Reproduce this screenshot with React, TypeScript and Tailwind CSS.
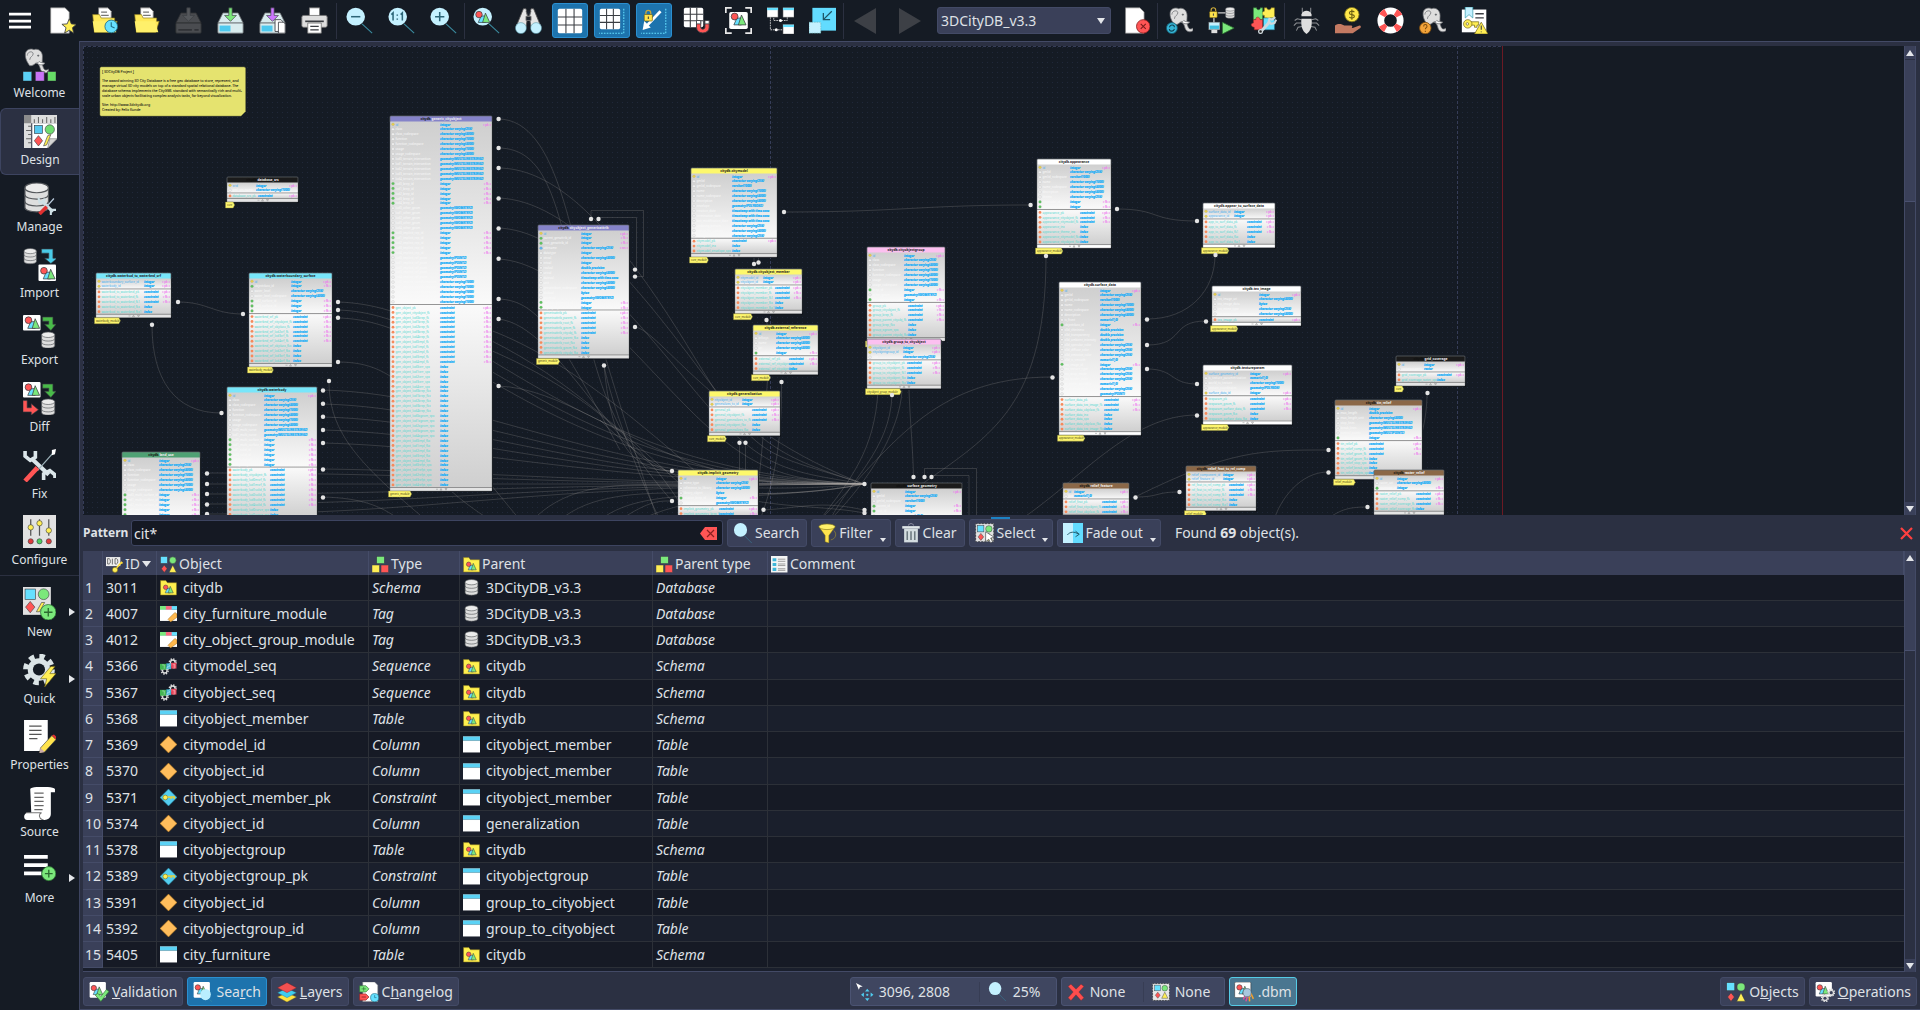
import type { ReactNode } from "react";

/* ------------------------------------------------------------------ icons */

const RED = "#ff5555";
const CYAN = "#66e0ff";
const GREEN = "#7be87b";
const YELLOW = "#ffee55";
const PALE = "#c4f1ff";
const GRAY = "#dedede";
const INK = "#3a3d42";

function Icon({ size = 27, children }: { size?: number; children: ReactNode }) {
  return (
    <svg width={size} height={size} viewBox="0 0 32 32" fill="none" aria-hidden="true" className="shrink-0">
      {children}
    </svg>
  );
}

const Shapes = ({ x = 0, y = 0, s = 1 }: { x?: number; y?: number; s?: number }) => (
  <g transform={`translate(${x} ${y}) scale(${s})`} stroke={INK} strokeWidth="1">
    <path d="M9 9h6v9H5z" fill={CYAN} />
    <path d="M15 5l6 13H11z" fill={GREEN} />
    <circle cx="6" cy="7" r="4.5" fill={RED} />
  </g>
);

const FourShapes = ({ x = 0, y = 0, s = 1 }: { x?: number; y?: number; s?: number }) => (
  <g transform={`translate(${x} ${y}) scale(${s})`} stroke={INK} strokeWidth="1">
    <rect x="1" y="1" width="13" height="13" fill={CYAN} />
    <circle cx="24" cy="8" r="6.5" fill={GREEN} />
    <path d="M8 17l5.500 7L8 31l-5.500-7z" fill={RED} />
    <path d="M24 17l7 14H17z" fill={YELLOW} />
  </g>
);

const Cylinder = ({ x = 0, y = 0, s = 1 }: { x?: number; y?: number; s?: number }) => (
  <g transform={`translate(${x} ${y}) scale(${s})`} stroke="#55585c" strokeWidth="1.2">
    <path d="M2 6v20c0 6 24 6 24 0V6" fill={GRAY} />
    <ellipse cx="14" cy="6" rx="12" ry="5" fill="#ececec" />
    <path d="M2 13c0 6 24 6 24 0M2 20c0 6 24 6 24 0" />
  </g>
);

const Elephant = ({ x = 0, y = 0, s = 1 }: { x?: number; y?: number; s?: number }) => (
  <g transform={`translate(${x} ${y}) scale(${s})`} stroke="#6b6e72" strokeWidth=".9">
    <path
      d="M3 6C4 2 9 0 13 2c5-2 10 2 10 8 0 5-1 9 1 13 1 3 3 4 6 2v3c-4 3-9 1-10-5-1-3-2-5-5-5-2 2-4 3-7 3-3-4-6-9-5-15z"
      fill={GRAY}
    />
    <path d="M5 9c0-5 7-6 7-2 0 3-4 3-4 7M16 17c4 3 7 2 10 1" />
    <path d="M17 18c3 3 7 2 9 0-2-1-5 0-7-2z" fill="#fff" />
    <circle cx="18" cy="9" r=".8" fill={INK} />
  </g>
);

const Page = ({ x = 3, y = 1, w = 22, h = 30 }: { x?: number; y?: number; w?: number; h?: number }) => (
  <path d={`M${x} ${y}h${w - 5}l5 5v${h - 5}h-${w}z`} fill="#fff" stroke="#888" strokeWidth=".8" />
);

const Folder = () => (
  <>
    <path d="M9 1h11l4 4v12H9z" fill="#fff" stroke="#777" />
    <path d="M12 6h7M12 10h9" stroke="#777" strokeWidth="1.500" />
    <path d="M2 9h8l2 4h16v4l3 0-4 13H4z" fill="#ffe95a" stroke="#8a7a20" strokeWidth=".8" />
    <path d="M4 30l-2-13h24l4 13z" fill="#fff06a" />
  </>
);

const Drive = ({ body, arrow, dim }: { body: string; arrow: string; dim?: boolean }) => (
  <>
    <path d="M7 7h18l6 12H1z" fill={body} stroke={dim ? "#2c2e31" : "#6a6d70"} />
    <rect x="1" y="19" width="30" height="12" rx="1" fill={body} stroke={dim ? "#2c2e31" : "#6a6d70"} />
    {dim ? <path d="M4 27h16M23 27h5" stroke="#303236" strokeWidth="2" /> : <rect x="3" y="22" width="13" height="7" fill="#4ec9ee" />}
    <path d="M14 1h4v9h5l-7 7-7-7h5z" fill={arrow} stroke={INK} strokeWidth=".8" />
  </>
);

const Lens = ({ children }: { children?: ReactNode }) => (
  <>
    <path d="M19 20l12 11" stroke="#3b8ca0" strokeWidth="1.300" />
    <ellipse cx="11.500" cy="11.500" rx="11" ry="10.500" fill={PALE} />
    {children}
  </>
);

const Grid = ({ n = 3, s = 30, o = 1 }: { n?: number; s?: number; o?: number }) => (
  <g>
    <rect x={o} y={o} width={s} height={s} rx="2" fill="#fff" />
    {Array.from({ length: n - 1 }, (_, i) => {
      const p = o + (s / n) * (i + 1);
      return <path key={i} d={`M${p} ${o}v${s}M${o} ${p}h${s}`} stroke={INK} strokeWidth="1.300" />;
    })}
  </g>
);

const Win = ({ x, y, w, h }: { x: number; y: number; w: number; h: number }) => (
  <g>
    <rect x={x} y={y} width={w} height={h} fill="#fff" stroke="#777" strokeWidth=".6" />
    <rect x={x} y={y} width={w} height={h / 4} fill={CYAN} />
  </g>
);

const Gear = ({ cx, cy, r, hole, fill = GRAY }: { cx: number; cy: number; r: number; hole: string; fill?: string }) => (
  <g>
    <circle cx={cx} cy={cy} r={r * 0.9} stroke={fill} strokeWidth={r * 0.4} strokeDasharray={`${r * 0.36} ${r * 0.347}`} />
    <circle cx={cx} cy={cy} r={r * 0.78} fill={fill} />
    <circle cx={cx} cy={cy} r={r * 0.42} fill={hole} />
  </g>
);

const Lock = ({ x, y, s = 1 }: { x: number; y: number; s?: number }) => (
  <g transform={`translate(${x} ${y}) scale(${s})`}>
    <path d="M3 6V4c0-4 6-4 6 0v2" stroke="#c9a83a" strokeWidth="1.500" />
    <rect x="1" y="6" width="10" height="8" rx="1" fill="#ffe34d" stroke="#6b5a10" strokeWidth=".8" />
    <path d="M6 8.500v3" stroke={INK} strokeWidth="1.300" />
  </g>
);

const Plus = ({ cx, cy, r }: { cx: number; cy: number; r: number }) => (
  <g>
    <circle cx={cx} cy={cy} r={r} fill={GREEN} stroke="#2f7a35" strokeWidth=".8" />
    <path d={`M${cx - r * 0.55} ${cy}h${r * 1.1}M${cx} ${cy - r * 0.55}v${r * 1.1}`} stroke="#2c6b30" strokeWidth="1.300" />
  </g>
);

const Arc = ({ color, d }: { color: string; d: string }) => <path d={d} fill={color} stroke={INK} strokeWidth=".6" />;

const icons: Record<string, ReactNode> = {
  menu: <path d="M0 4h32v4H0zM0 14h32v4H0zM0 23h32v4H0z" fill="#fff" />,
  newFile: (
    <>
      <Page x={2} y={1} w={22} h={30} />
      <path d="M24 14l2.500 6 6 .5-4.700 4 1.500 6.500-5.300-3.500-5.500 3.500 1.700-6.500-4.900-4 6.200-.5z" fill={YELLOW} stroke={INK} />
    </>
  ),
  recent: (
    <>
      <Folder />
      <circle cx="24" cy="23" r="7.500" fill={CYAN} stroke="#1f6d85" />
      <path d="M24 18v5l4 2" stroke="#1f6d85" strokeWidth="1.300" />
    </>
  ),
  open: <Folder />,
  saveOff: <Drive body="#4a4c50" arrow="#55585c" dim />,
  save: <Drive body="#d9ecee" arrow={GREEN} />,
  saveCopy: (
    <>
      <Drive body="#d9ecee" arrow="#cc77ff" />
      <path d="M19 15h7l2 2v12h-9z" fill="#fff" stroke={INK} />
      <path d="M23 18h6l2 2v11h-8z" fill="#fff" stroke={INK} />
    </>
  ),
  print: (
    <>
      <path d="M10 1h12v12H10z" fill="#fff" stroke="#777" />
      <rect x="1" y="10" width="30" height="14" rx="2" fill={GRAY} stroke="#777" />
      <path d="M5 17h22" stroke={INK} strokeWidth="2" />
      <path d="M8 19h16v12H8z" fill="#fff" stroke="#777" />
      <path d="M11 23h10M11 27h10" stroke={INK} strokeWidth="1.500" />
    </>
  ),
  zoomOut: (
    <Lens>
      <path d="M6 11.500h11" stroke="#2c6678" strokeWidth="1.800" />
    </Lens>
  ),
  zoomOne: (
    <Lens>
      <path d="M4 9l2-2v9M15 9l2-2v9M11 9v1.500M11 13.500V15" stroke="#2c6678" strokeWidth="1.800" />
    </Lens>
  ),
  zoomIn: (
    <Lens>
      <path d="M6 11.500h11M11.500 6v11" stroke="#2c6678" strokeWidth="1.800" />
    </Lens>
  ),
  findObj: (
    <Lens>
      <Shapes x={2} y={3} s={0.85} />
    </Lens>
  ),
  binoculars: (
    <>
      <path d="M10 2h3l2 9-2 13H1zM22 2h-3l-2 9 2 13h12z" fill="#e6e6e6" stroke="#555" />
      <path d="M13 5l2 6h2l2-6M13 11h6v5h-6z" fill="#1c222c" stroke="#777" />
      <ellipse cx="7" cy="25" rx="6.500" ry="6.500" fill={PALE} stroke="#4a8a9a" strokeWidth=".6" />
      <ellipse cx="25" cy="25" rx="6.500" ry="6.500" fill={PALE} stroke="#4a8a9a" strokeWidth=".6" />
    </>
  ),
  grid: <Grid />,
  gridPage: (
    <>
      <Grid s={25} o={1} />
      <path d="M30.500 1v30H0" stroke={CYAN} strokeWidth="1.300" strokeDasharray="2 1.500" />
    </>
  ),
  delimiter: (
    <>
      <path d="M30.500 1v30H0" stroke={CYAN} strokeWidth="1.300" strokeDasharray="2 1.500" />
      <path d="M24 4L7 22" stroke="#fff" strokeWidth="3.500" />
      <path d="M2 27l2-11 8 8z" fill="#fff" />
      <Lock x={3} y={2} />
    </>
  ),
  snap: (
    <>
      <Grid s={23} o={1} />
      <path d="M16 17v7c0 9 15 9 15 0v-7h-5v7c0 3-5 3-5 0v-7z" fill={RED} stroke={INK} />
      <path d="M16 16h5v4h-5zM26 16h5v4h-5z" fill="#fff" stroke={INK} />
    </>
  ),
  fit: (
    <>
      <path d="M1 7V1h7M24 1h7v6M31 25v6h-7M8 31H1v-6" stroke="#e8e8e8" strokeWidth="2" />
      <rect x="5" y="6" width="22" height="20" rx="2" fill="#fff" />
      <Shapes x={6} y={5} s={0.9} />
    </>
  ),
  overview: (
    <>
      <path d="M8 10v6h16v-6M16 16v0M4 12v15h15" stroke="#ddd" strokeWidth="1" strokeDasharray="2 1" />
      <Win x={0} y={1} w={13} h={11} />
      <Win x={19} y={1} w={13} h={11} />
      <Win x={19} y={21} w={13} h={11} />
      <circle cx="16" cy="16" r="1.800" fill="#fff" />
      <circle cx="11" cy="27" r="1.800" fill="#fff" />
    </>
  ),
  compact: (
    <>
      <rect x="4" y="1" width="28" height="27" fill="#62dcff" />
      <rect x="0" y="18" width="14" height="13" fill={PALE} stroke="#5aa" strokeWidth=".6" strokeDasharray="2 1" />
      <path d="M27 5L17 15M17 7v8h8" stroke="#1e5566" strokeWidth="1.500" />
    </>
  ),
  closeModel: (
    <>
      <Page x={3} y={1} w={22} h={30} />
      <circle cx="24" cy="23" r="8" fill={RED} stroke="#8d2020" />
      <path d="M21 20l6 6M27 20l-6 6" stroke="#7a1c1c" strokeWidth="1.300" />
    </>
  ),
  elephantSync: (
    <>
      <Elephant x={2} s={1} />
      <circle cx="7" cy="25" r="6.500" fill="#35b5d6" stroke="#17586b" />
      <path d="M4 24c1-4 6-3 6 0M10 26c-1 4-6 3-6 0" stroke="#124555" strokeWidth="1.300" />
    </>
  ),
  deploy: (
    <>
      <path d="M12 7h9M7 12v18" stroke="#ccc" strokeWidth="1.500" />
      <Lock x={1} y={0} s={0.9} />
      <Cylinder x={20} y={0} s={0.44} />
      <rect x="1" y="18" width="13" height="9" fill={PALE} stroke="#777" strokeWidth=".6" />
      <path d="M2 22h11v4H2z" fill="#3fbfe0" />
      <path d="M4 27h7v4H4z" fill={GRAY} />
      <path d="M17 18l14 7-14 7z" fill={GREEN} stroke="#2b6a30" />
    </>
  ),
  plugin: (
    <>
      <path d="M4 1h4c-1 3 5 3 4 0h3v5c3-1 3 5 0 4v5H4z" fill={GREEN} stroke="#2b6a30" strokeWidth=".6" />
      <path d="M17 1h3c0 3 5 3 5 0h4v12h-5c1 4-5 4-4 0h-3v-3c-3 0-3-5 0-5z" fill={YELLOW} stroke="#80741a" strokeWidth=".6" />
      <path d="M4 15h3c-1-4 5-4 5 0h3v12H5v-3c-4 0-5-5-1-5z" fill={RED} stroke="#8d2020" strokeWidth=".6" />
      <path d="M16 13h13v14H16z" fill={CYAN} stroke="#1f6d85" strokeWidth=".6" />
      <path d="M13 29l11-12" stroke="#cfd8dc" strokeWidth="3.500" />
      <path d="M30 12l-4 3-3-1-1 4 3 2 4-1 2-4" stroke="#cfd8dc" strokeWidth="2.500" />
      <circle cx="12.500" cy="29" r="2.300" fill="#222" stroke="#cfd8dc" strokeWidth="1.500" />
    </>
  ),
  bug: (
    <>
      <path d="M11 1v5l3 3M21 1v5l-3 3M10 15l-5-1-3 2M10 19l-6 0-3 3M11 23l-5 1-2 4M22 15l5-1 3 2M22 19h6l3 3M21 23l5 1 2 4" stroke="#8b8e92" strokeWidth="1.200" />
      <path d="M10 9c1-6 11-6 12 0v2H10z" fill={GRAY} />
      <path d="M10 14h12c1 8-1 15-6 18-5-3-7-10-6-18z" fill={GRAY} />
    </>
  ),
  donate: (
    <>
      <circle cx="20" cy="9" r="8.500" fill="#ffe84a" stroke="#80741a" />
      <path d="M23 6c-2-2-6-1-6 1 0 3 6 1 6 4 0 2-4 3-6 1M20 3v12" stroke="#6b5f12" strokeWidth="1.300" />
      <path d="M0 22c4-3 8-2 11 0h8c2 0 2 3 0 3h-6 8l8-3c2 0 2 2 1 3l-9 6H0z" fill="#c47a62" />
    </>
  ),
  support: (
    <>
      <circle cx="16" cy="16" r="11.500" stroke="#fff" strokeWidth="8" />
      <circle cx="16" cy="16" r="11.500" stroke={RED} strokeWidth="8" strokeDasharray="6.400 11.660" strokeDashoffset="-5.800" />
    </>
  ),
  about: (
    <>
      <Elephant x={2} s={1} />
      <circle cx="7.500" cy="25" r="6.800" fill="#f2a33a" stroke="#7d4d10" />
      <path d="M5.500 23c0-3 4-3 4 0 0 1.500-2 1.500-2 3.500M7.500 28v1.500" stroke="#7d4d10" strokeWidth="1.200" />
    </>
  ),
  license: (
    <>
      <rect x="1" y="3" width="29" height="27" fill="#fff" />
      <path d="M5 0h9v13l-4.500-4L5 13z" fill={PALE} stroke="#39a" strokeWidth=".8" />
      <path d="M17 8h10M17 13h10" stroke={INK} strokeWidth="1.500" />
      <path d="M11 17.500h10v4h-2v2.500h-3v-2.500h-5" fill={YELLOW} stroke="#6b5f12" strokeWidth=".8" />
      <circle cx="8" cy="20" r="5" fill={YELLOW} stroke="#6b5f12" strokeWidth=".8" />
      <circle cx="7.500" cy="20" r="1.500" fill="#fff" stroke="#6b5f12" strokeWidth=".8" />
      <path d="M24 18l8 14H16z" fill={YELLOW} stroke="#6b5f12" strokeWidth=".8" />
      <path d="M24 22v5M24 29v1" stroke={INK} strokeWidth="1.300" />
    </>
  ),
  welcome: (
    <>
      <Elephant x={0} y={0} s={0.82} />
      <rect x="0" y="23" width="8.500" height="9" fill="#5ad0f5" stroke={INK} strokeWidth=".5" />
      <rect x="12" y="23" width="8.500" height="9" fill="#c873f5" stroke={INK} strokeWidth=".5" />
      <rect x="24" y="23" width="8" height="9" fill="#66dd66" stroke={INK} strokeWidth=".5" />
    </>
  ),
  design: (
    <>
      <path d="M0 0h32v8H7v24H0z" fill={GRAY} />
      <path d="M0 0h7v8H0z" fill="#8c8c8c" />
      <path d="M10 4v4M14 2v6M18 4v4M22 2v6M26 4v4M30 2v6M4 11h3M2 15h5M4 19h3M2 23h5M4 27h3" stroke="#666" />
      <path d="M8 8h24v15l-9 9H8z" fill="#fff" />
      <rect x="10" y="10" width="8" height="8" fill="#55c8f0" stroke={INK} strokeWidth=".6" />
      <circle cx="25" cy="14" r="4.500" fill="#6fdc6f" stroke={INK} strokeWidth=".6" />
      <path d="M14 20l4 5-4 5-4-5z" fill={RED} stroke={INK} strokeWidth=".6" />
      <path d="M23 20l3-1-4 10-3 1z" fill={YELLOW} stroke={INK} strokeWidth=".6" />
      <path d="M32 23h-7l-2 9z" fill="#d5d5d5" stroke="#777" strokeWidth=".6" />
    </>
  ),
  manage: (
    <>
      <Cylinder x={0} y={0} s={0.95} />
      <path d="M18 18l11 11" stroke="#cfe0e6" strokeWidth="3" />
      <path d="M15 15l1 5 4 0 1-4M27 32l0-5 5 0" stroke="#cfe0e6" strokeWidth="2" />
      <path d="M30 16L21 26" stroke="#bcd" strokeWidth="1.200" />
      <path d="M23 24l-7 7" stroke="#e03030" strokeWidth="3.500" />
    </>
  ),
  import: (
    <>
      <Cylinder x={0} y={0} s={0.5} />
      <Arc color="#49cbe8" d="M18 1h11v9h4l-6 5-6-5h4V5h-7z" />
      <rect x="15" y="16" width="17" height="16" rx="1" fill="#fff" />
      <Shapes x={16} y={17} s={0.72} />
    </>
  ),
  export: (
    <>
      <rect x="0" y="0" width="17" height="15" rx="1" fill="#fff" />
      <Shapes x={1} y={0} s={0.72} />
      <Arc color="#49bb49" d="M19 2h10v7h3l-5 6-6-6h4V6h-6z" />
      <Cylinder x={17} y={16} s={0.53} />
    </>
  ),
  diff: (
    <>
      <rect x="0" y="0" width="17" height="15" rx="1" fill="#fff" />
      <Shapes x={1} y={0} s={0.72} />
      <Arc color="#49bb49" d="M19 2h10v7h3l-5 6-6-6h4V6h-6z" />
      <Arc color={RED} d="M0 18h4v7h4v-4l7 6-7 5v-3H0z" />
      <Cylinder x={17} y={16} s={0.53} />
    </>
  ),
  fix: (
    <>
      <path d="M8 9l17 16" stroke="#dbe6ea" strokeWidth="4" />
      <path d="M2 2v5l5 4 5-3 0-6M20 30l0-6 6-3 5 4v3" stroke="#dbe6ea" strokeWidth="3.500" />
      <path d="M29 4L14 21" stroke="#9fb4bb" strokeWidth="1.200" />
      <path d="M28 1l4-1-1 5-3 1z" fill="#fff" />
      <path d="M14 18L2 31" stroke={RED} strokeWidth="4.500" />
    </>
  ),
  configure: (
    <>
      <rect x="0" y="0" width="32" height="32" fill="#e2e2e2" />
      <path d="M7.500 4v16M16 4v16M25 4v16" stroke="#555" strokeWidth="1.200" />
      <circle cx="7.500" cy="12" r="2.600" fill={YELLOW} stroke={INK} strokeWidth=".6" />
      <circle cx="16" cy="8" r="2.600" fill={YELLOW} stroke={INK} strokeWidth=".6" />
      <circle cx="25" cy="15" r="2.600" fill={YELLOW} stroke={INK} strokeWidth=".6" />
      <circle cx="7.500" cy="25.500" r="2.500" fill="#e03c3c" stroke={INK} strokeWidth=".6" />
      <circle cx="16" cy="25.500" r="2.500" fill="#4fd05f" stroke={INK} strokeWidth=".6" />
      <circle cx="25" cy="25.500" r="2.500" fill="#e03c3c" stroke={INK} strokeWidth=".6" />
    </>
  ),
  new: (
    <>
      <rect x="0" y="0" width="27" height="27" fill="#e2e2e2" />
      <rect x="2" y="2" width="10" height="10" fill={CYAN} stroke={INK} strokeWidth=".6" />
      <circle cx="20" cy="7" r="5.200" fill={GREEN} stroke={INK} strokeWidth=".6" />
      <path d="M7 14l4.500 5.500L7 25l-4.500-5.500z" fill={RED} stroke={INK} strokeWidth=".6" />
      <path d="M18 15h3l-5 9h-3z" fill={YELLOW} stroke={INK} strokeWidth=".6" />
      <Plus cx={24.500} cy={24.500} r={7.500} />
    </>
  ),
  quick: (
    <>
      <Gear cx={15.500} cy={15} r={14} hole="#151b24" fill="#dbe4e6" />
      <path d="M27 12L17 24h6l-2 8 11-13h-6l5-7z" fill={YELLOW} stroke="#6b5f12" strokeWidth=".6" />
    </>
  ),
  properties: (
    <>
      <path d="M1 0h23v20l-5 10H1z" fill="#fff" />
      <path d="M6 6h12M6 10h12M6 14h12M6 18h8" stroke="#555" strokeWidth="1.200" />
      <path d="M17 27L28 15l4 4-11 12-5 1z" fill="#ffe34d" stroke={INK} strokeWidth=".6" />
      <path d="M28 15l2-1 2 2v3z" fill="#e03030" />
      <path d="M17 27l4 4-5 1z" fill="#caa" />
    </>
  ),
  source: (
    <>
      <path d="M7 2c1-3 22-3 24 0v3h-4v21c0 4-3 6-6 6H4c-4 0-4-7 1-7h3z" fill="#fff" />
      <path d="M11 6h9M11 10h9M11 14h9M11 18h9M11 22h8" stroke="#666" strokeWidth="1.200" />
      <path d="M3 25h15c-3 1-3 6 2 7" stroke="#777" />
    </>
  ),
  more: (
    <>
      <path d="M1 2h23v3.500H1zM1 10h23v3.500H1zM1 18h17v3.500H1z" fill="#fff" />
      <Plus cx={25} cy={20} r={6.800} />
    </>
  ),
  oid: (
    <>
      <rect x="0" y="2" width="27" height="17" fill="#eee" />
      <path d="M3 5v10h3c3 0 3-10 0-10zM12 5v11M17 5v10h3c3 0 3-10 0-10z" stroke="#555" strokeWidth="1.500" />
      <circle cx="17" cy="26" r="5" fill={YELLOW} stroke="#6b5f12" />
      <path d="M20 22l9-10 2 2" stroke="#ffdf3a" strokeWidth="3" />
    </>
  ),
  object: <FourShapes />,
  type: (
    <g stroke={INK} strokeWidth=".8">
      <rect x="9" y="1" width="14" height="13" fill={GREEN} />
      <rect x="0" y="17" width="14" height="14" fill={YELLOW} />
      <rect x="17" y="17" width="14" height="14" fill={RED} />
    </g>
  ),
  schema: (
    <>
      <path d="M1 3h10l3 4h17v23H1z" fill="#fff04f" stroke="#8a7a20" strokeWidth="1" />
      <Shapes x={5} y={9} s={0.95} />
    </>
  ),
  comment: (
    <>
      <rect x="0" y="0" width="31" height="31" fill="#f4f4f4" />
      <path d="M3 4h7v6H3zM3 13h7v6H3zM3 22h7v6H3z" fill="#3fb5d8" />
      <path d="M13 6h14M13 10h14M13 15h14M13 18h14M13 24h14M13 27h14" stroke="#777" strokeWidth="1.300" />
    </>
  ),
  tag: (
    <>
      <path d="M0 2h32v7H0z" fill={CYAN} />
      <path d="M0 2h11v7H0z" fill={GREEN} />
      <path d="M11 2h11v7H11z" fill="#ff6680" />
      <path d="M0 9h32v21H0z" fill="#fff" />
      <path d="M28 14l4 3v6L20 32l-5-5z" fill="#ffb84d" stroke="#8a5c14" strokeWidth=".8" />
    </>
  ),
  sequence: (
    <>
      <Gear cx={24} cy={8} r={7} hole="#161a25" />
      <Gear cx={9} cy={24} r={7} hole="#161a25" />
      <rect x="0" y="11" width="12" height="11" fill="#43b552" />
      <rect x="12" y="10" width="9" height="11" fill="#3db7d4" />
      <rect x="21" y="9" width="10" height="11" fill="#e8455a" />
      <path d="M4 13h4v7M14 13h4v3h-4v3h4M24 12h4v7h-4M25 15h3" stroke="#fff" strokeWidth="1" opacity=".7" />
    </>
  ),
  table: (
    <>
      <rect x="0" y="1" width="32" height="30" fill="#fff" />
      <rect x="0" y="1" width="32" height="7" fill="#5bd2f5" />
      <path d="M0 8.500h32" stroke="#2b7d98" strokeWidth="1" />
    </>
  ),
  column: <path d="M16 0l16 16-16 16L0 16z" fill="#ffbd5c" stroke="#a86b15" strokeWidth="1" />,
  constraint: (
    <>
      <path d="M16 0l16 16-16 16L0 16z" fill="#53cdf0" stroke="#247a94" strokeWidth="1" />
      <circle cx="10" cy="16" r="4.500" fill={YELLOW} stroke="#6b5f12" />
      <path d="M14 15h13v4M21 16v3" stroke="#e5d03a" strokeWidth="2.500" />
    </>
  ),
  database: <Cylinder x={2} y={0} s={1} />,
  search: (
    <>
      <path d="M18 20l12 12" stroke="#3b6f8a" strokeWidth="1.300" />
      <ellipse cx="12" cy="11" rx="10.500" ry="11" fill={PALE} />
    </>
  ),
  filter: (
    <>
      <path d="M3 6l10 14v10l6 2V20L29 6z" fill="#ffe34d" stroke="#80741a" strokeWidth=".8" />
      <ellipse cx="16" cy="6" rx="13" ry="4.500" fill="#fff06a" stroke="#80741a" />
      <path d="M27 12c6 6 2 14-5 15" stroke="#a5932a" strokeWidth="1" />
    </>
  ),
  trash: (
    <>
      <path d="M5 9h22v22H5z" fill="#d4dde0" />
      <path d="M2 5h28v4H2z" fill="#dfe6e8" />
      <path d="M12 4c0-4 8-4 8 0" stroke="#aab" strokeWidth="1.200" />
      <path d="M10 13v14M16 13v14M22 13v14" stroke="#6d7a80" strokeWidth="2.500" />
    </>
  ),
  select: (
    <>
      <rect x="1" y="1" width="29" height="29" fill="#e2e2e2" stroke={INK} strokeWidth="1.500" strokeDasharray="3 2" />
      <FourShapes x={3} y={3} s={0.8} />
      <path d="M17 14l14 9-6 1 3 6-3 2-3-6-5 4z" fill="#fff" stroke={INK} />
    </>
  ),
  fade: (
    <>
      <rect x="0" y="0" width="16" height="32" fill={PALE} />
      <rect x="16" y="0" width="16" height="32" fill="#62dcff" />
      <path d="M7 19c4-5 11-6 18-1M20 13l6 5-6 4" stroke="#1e5566" strokeWidth="1.500" />
    </>
  ),
  validation: (
    <>
      <rect x="1" y="0" width="26" height="25" rx="2" fill="#fff" />
      <Shapes x={2} y={3} s={0.95} />
      <path d="M10 21l4-3 5 5 9-11 4 3-13 16z" fill={GREEN} stroke="#2b6a30" />
    </>
  ),
  searchDoc: (
    <>
      <rect x="1" y="0" width="26" height="25" rx="2" fill="#fff" />
      <Shapes x={2} y={2} s={0.95} />
      <path d="M24 26l7 6" stroke="#3b8ca0" />
      <ellipse cx="20" cy="20" rx="8.500" ry="9" fill="#b9eeff" />
    </>
  ),
  layers: (
    <>
      <path d="M16 17l15 7-15 8-15-8z" fill="#ffe23f" stroke="#80741a" strokeWidth=".6" />
      <path d="M16 10l15 7-15 8-15-8z" fill="#3fcdf0" stroke="#1f6d85" strokeWidth=".6" />
      <path d="M16 1l15 8-15 8-15-8z" fill="#f25050" stroke="#8d2020" strokeWidth=".6" />
    </>
  ),
  changelog: (
    <>
      <Page x={6} y={0} w={24} h={31} />
      <path d="M1 6h10l5 5-5 5H1z" fill={GREEN} stroke="#2b6a30" />
      <path d="M4 11h7M7.500 8v6" stroke="#2b6a30" />
      <path d="M1 19h10l5 5-5 5H1z" fill={RED} stroke="#8d2020" />
      <path d="M4 24h7" stroke="#5d1515" />
      <circle cx="25" cy="25" r="6.500" fill={CYAN} stroke="#1f6d85" />
      <path d="M25 21v4h3" stroke="#1f6d85" />
    </>
  ),
  coords: (
    <>
      <path d="M0 0l12 6-5 1-2 5z" fill="#fff" />
      <path d="M20 10l4 5h-8zM20 32l4-5h-8zM9 21l5-4v8zM31 21l-5-4v8z" fill="#4fcdf0" />
      <circle cx="20" cy="21" r="2" fill="#4fcdf0" />
    </>
  ),
  cross: <path d="M2 6l5-4 9 9 9-9 5 4-9 10 9 10-5 5-9-10-9 10-5-5 9-10z" fill="#ff4d4d" stroke="#8d2020" strokeWidth=".6" />,
  selected: (
    <>
      <rect x="1" y="1" width="30" height="30" fill="#e8e8e8" stroke={INK} strokeWidth="1.500" strokeDasharray="3 2" />
      <FourShapes x={4} y={3} s={0.78} />
    </>
  ),
  dbm: (
    <>
      <rect x="1" y="0" width="26" height="25" rx="2" fill="#fff" stroke={INK} />
      <Shapes x={3} y={2} s={0.95} />
      <path d="M20 16l-5 12M22 22l-3 9" stroke="#d94f9a" strokeWidth="2.500" />
      <path d="M24 20l1 11M27 18l4 9" stroke="#f0a030" strokeWidth="2.500" />
      <circle cx="21" cy="17" r="6.500" fill="#a9c7dd" stroke="#567" />
    </>
  ),
  operations: (
    <>
      <rect x="1" y="0" width="26" height="23" rx="2" fill="#fff" />
      <Shapes x={2} y={2} s={0.95} />
      <Gear cx={26} cy={17} r={6} hole="#3a4059" />
      <Gear cx={16} cy={26} r={6} hole="#3a4059" />
    </>
  ),
};

const Glyph = ({ name, size }: { name: string; size?: number }) => <Icon size={size}>{icons[name]}</Icon>;

/* ---------------------------------------------------------------- toolbar */

function ToolButton({ name, label, active }: { name: string; label: string; active?: boolean }) {
  return (
    <button
      type="button"
      aria-label={label}
      aria-pressed={active}
      className={
        active
          ? "flex h-[35px] w-9 items-center justify-center rounded-[3px] border border-[#2b8fd0] bg-[#1d73ad]"
          : "flex h-[35px] w-9 items-center justify-center"
      }
    >
      <Glyph name={name} size={active ? 26 : 27} />
    </button>
  );
}

const Group = ({ children }: { children: ReactNode }) => <div className="flex gap-1.5">{children}</div>;
const Sep = () => <div className="mx-[3px] h-9 w-px bg-[#2b3040]" />;

function Toolbar() {
  return (
    <header className="flex h-[41px] shrink-0 items-center bg-[#151b24] pl-0.5">
      <Group>
        <button type="button" aria-label="Menu" className="flex h-[35px] w-9 items-center justify-center">
          <Glyph name="menu" size={22} />
        </button>
        <ToolButton name="newFile" label="New model" />
        <ToolButton name="recent" label="Recent models" />
        <ToolButton name="open" label="Open model" />
        <ToolButton name="saveOff" label="Save" />
        <ToolButton name="save" label="Save as" />
        <ToolButton name="saveCopy" label="Save all" />
        <ToolButton name="print" label="Print" />
      </Group>
      <div className="mx-1 h-9 w-px bg-[#2b3040]" />
      <Group>
        <ToolButton name="zoomOut" label="Zoom out" />
        <ToolButton name="zoomOne" label="Normal zoom" />
        <ToolButton name="zoomIn" label="Zoom in" />
      </Group>
      <Sep />
      <Group>
        <ToolButton name="findObj" label="Magnifier" />
        <ToolButton name="binoculars" label="Overview" />
        <ToolButton name="grid" label="Show grid" active />
        <ToolButton name="gridPage" label="Show delimiters" active />
        <ToolButton name="delimiter" label="Lock delimiter scale" active />
        <ToolButton name="snap" label="Align to grid" />
        <ToolButton name="fit" label="Fit to objects" />
        <ToolButton name="overview" label="Arrange objects" />
        <ToolButton name="compact" label="Compact view" />
      </Group>
      <Sep />
      <div className="flex items-center gap-[9px]">
        <button type="button" aria-label="Previous" className="flex h-9 w-9 items-center justify-center">
          <svg width="22" height="26" viewBox="0 0 22 26" aria-hidden="true">
            <path d="M22 0v26L0 13z" fill="#3d4046" />
          </svg>
        </button>
        <button type="button" aria-label="Next" className="flex h-9 w-9 items-center justify-center">
          <svg width="22" height="26" viewBox="0 0 22 26" aria-hidden="true">
            <path d="M0 0v26l22-13z" fill="#3d4046" />
          </svg>
        </button>
        <div className="relative">
          <select
            aria-label="Model"
            className="h-[27px] w-[174px] appearance-none rounded-[3px] border border-[#434a66] bg-[#3a4059] pl-[3px] text-sm leading-5 text-[#dfe1e6]"
          >
            <option>3DCityDB_v3.3</option>
          </select>
          <svg width="8" height="6" viewBox="0 0 8 6" aria-hidden="true" className="pointer-events-none absolute top-[11px] right-1.5">
            <path d="M0 0h8L4 6z" fill="#e4e6ea" />
          </svg>
        </div>
      </div>
      <div className="w-[7px]" />
      <ToolButton name="closeModel" label="Close model" />
      <Sep />
      <Group>
        <ToolButton name="elephantSync" label="Manage connections" />
        <ToolButton name="deploy" label="Deploy" />
        <ToolButton name="plugin" label="Plug-ins" />
      </Group>
      <Sep />
      <Group>
        <ToolButton name="bug" label="Report a bug" />
        <ToolButton name="donate" label="Donate" />
        <ToolButton name="support" label="Support" />
        <ToolButton name="about" label="About" />
        <ToolButton name="license" label="License" />
      </Group>
    </header>
  );
}

/* ---------------------------------------------------------------- sidebar */

type NavItem = { icon: string; label: string; active?: boolean; menu?: boolean };

const mainNav: NavItem[] = [
  { icon: "welcome", label: "Welcome" },
  { icon: "design", label: "Design", active: true },
  { icon: "manage", label: "Manage" },
  { icon: "import", label: "Import" },
  { icon: "export", label: "Export" },
  { icon: "diff", label: "Diff" },
  { icon: "fix", label: "Fix" },
  { icon: "configure", label: "Configure" },
];

const toolNav: NavItem[] = [
  { icon: "new", label: "New", menu: true },
  { icon: "quick", label: "Quick", menu: true },
  { icon: "properties", label: "Properties" },
  { icon: "source", label: "Source" },
  { icon: "more", label: "More", menu: true },
];

function NavButton({ icon, label, active, menu }: NavItem) {
  return (
    <button
      type="button"
      className={
        active
          ? "relative flex flex-col items-center gap-1 rounded-l-md border border-r-0 border-[#3d4460] bg-[#2b3042] pt-1.5"
          : "relative flex flex-col items-center gap-1 pt-[7px]"
      }
    >
      <Glyph name={icon} size={33} />
      <span className="text-xs leading-4">{label}</span>
      {menu && (
        <svg width="6" height="8" viewBox="0 0 6 8" aria-hidden="true" className="absolute top-7 right-1">
          <path d="M0 0v8l6-4z" fill="#e4e6ea" />
        </svg>
      )}
    </button>
  );
}

function Sidebar() {
  return (
    <nav className="flex w-[79px] shrink-0 flex-col bg-[#151b24] text-[#dfe1e6]">
      <div className="grid h-[534px] auto-rows-fr">
        {mainNav.map((n) => (
          <NavButton key={n.label} {...n} />
        ))}
      </div>
      <div className="h-px bg-[#2b3040]" />
      <div className="mt-1 grid h-[333px] auto-rows-fr">
        {toolNav.map((n) => (
          <NavButton key={n.label} {...n} />
        ))}
      </div>
    </nav>
  );
}

/* ---------------------------------------------------------------- diagram */

type Row = [name: string, type: string, kind?: string];
type Entity = {
  name: string;
  x: number;
  y: number;
  w: number;
  split: number;
  extSplit: number;
  color: string;
  light?: boolean;
  attrs: Row[];
  ext: Row[];
  tag?: string;
};

const ROW = 4.93;
const V = (n: number) => `character varying(${n})`;
const I = "integer";
const pk = (n = "id"): Row => [n, I, "pk"];
const fk = (n: string): Row => [n, I, "fk"];
const lods = (from: number, to: number, suffix: string, type: string, kind?: string): Row[] =>
  Array.from({ length: to - from + 1 }, (_, i) => [`lod${from + i}_${suffix}`, type, kind]);
const codes: Row[] = [
  ["class", V(256)],
  ["class_codespace", V(4000)],
  ["function", V(1000)],
  ["function_codespace", V(4000)],
  ["usage", V(1000)],
  ["usage_codespace", V(4000)],
];
const ext = (p: string, fks: string[], idx: string[]): Row[] => [
  [`${p}_pk`, "constraint", "pk"],
  ...fks.map((f): Row => [`${p}_${f}`, "constraint", "fk"]),
  ...idx.map((f): Row => [`${p}_${f}`, "index"]),
];
const five = (a: string, b: string) => [0, 1, 2, 3, 4].map((n) => `${a}${n}${b}`);

const entities: Entity[] = [
  {
    name: "generic_cityobject", x: 390, y: 116, w: 102, split: 50, extSplit: 50, color: "#8583c9", light: true, tag: "generic_module",
    attrs: [
      pk(), ...codes,
      ...lods(0, 4, "terrain_intersection", "geometry(MULTILINESTRINGZ)"),
      ...lods(0, 4, "brep_id", I, "fk"),
      ...lods(0, 4, "other_geom", "geometry(GEOMETRYZ)"),
      ...lods(0, 4, "implicit_rep_id", I, "fk"),
      ...lods(0, 4, "implicit_ref_point", "geometry(POINTZ)"),
      ...lods(0, 4, "implicit_transformation", V(1000)),
    ],
    ext: ext("gen_object", ["cityobject_fk", ...five("lod", "brep_fk"), ...five("lod", "impl_fk")], [
      ...five("lod", "terr_spx"), ...five("lod", "brep_fkx"), ...five("lod", "xgeom_spx"), ...five("lod", "impl_fkx"), ...five("lod", "refpt_spx"),
    ]),
  },
  {
    name: "cityobject_genericattrib", x: 538, y: 225, w: 91, split: 43, extSplit: 43, color: "#8583c9", light: true, tag: "generic_module",
    attrs: [
      pk(), fk("parent_genattrib_id"), fk("root_genattrib_id"), ["attrname", V(256), "nn"], ["datatype", I], ["strval", V(4000)], ["intval", I],
      ["realval", "double precision"], ["urival", V(4000)], ["dateval", "timestamp with time zone"], ["unit", V(4000)],
      ["genattribset_codespace", V(4000)], ["blobval", "bytea"], ["geomval", "geometry(GEOMETRYZ)"], fk("surface_geometry_id"), fk("cityobject_id"),
    ],
    ext: ext("genericattrib", ["parent_fk", "root_fk", "geom_fk", "cityobj_fk"], ["parent_fkx", "root_fkx", "geom_fkx", "cityobj_fkx"]),
  },
  {
    name: "database_srs", x: 227, y: 177, w: 71, split: 29, extSplit: 31, color: "#1b1b1b", light: true, tag: "core",
    attrs: [pk("srid"), ["gml_srs_name", V(1000)]],
    ext: ext("database_srs", [], []),
  },
  {
    name: "waterbod_to_waterbnd_srf", x: 96, y: 273, w: 75, split: 48, extSplit: 48, color: "#78e6fa", tag: "waterbody_module",
    attrs: [pk("waterboundary_surface_id"), pk("waterbody_id")],
    ext: ext("waterbod_to_waterbnd", ["fk", "fk1"], ["fkx", "fkx1"]),
  },
  {
    name: "waterboundary_surface", x: 249, y: 273, w: 83, split: 42, extSplit: 44, color: "#78e6fa", tag: "waterbody_module",
    attrs: [pk(), fk("objectclass_id"), ["water_level", V(256)], ["water_level_codespace", V(4000)], ...lods(2, 4, "surface_id", I, "fk")],
    ext: ext("waterbnd_srf", ["cityobject_fk", "objclass_fk", "lod2srf_fk", "lod3srf_fk", "lod4srf_fk"], ["objclass_fkx", "lod2srf_fkx", "lod3srf_fkx", "lod4srf_fkx"]),
  },
  {
    name: "waterbody", x: 227, y: 387, w: 90, split: 37, extSplit: 43, color: "#78e6fa",
    attrs: [pk(), ...codes, ...lods(0, 1, "multi_curve", "geometry(MULTILINESTRINGZ)"), ...lods(0, 1, "multi_surface_id", I, "fk"), ...lods(1, 4, "solid_id", I, "fk")],
    ext: ext("waterbody", ["cityobject_fk", "lod0msrf_fk", "lod1msrf_fk", "lod1solid_fk", "lod2solid_fk", "lod3solid_fk", "lod4solid_fk"], ["lod0curve_spx", "lod1curve_spx"]),
  },
  {
    name: "land_use", x: 122, y: 452, w: 78, split: 37, extSplit: 40, color: "#4fa174", light: true,
    attrs: [pk(), ...codes, ...lods(0, 4, "multi_surface_id", I, "fk")],
    ext: [],
  },
  {
    name: "citymodel", x: 691, y: 168, w: 86, split: 41, extSplit: 41, color: "#fdf86c", tag: "core_module",
    attrs: [
      pk(), ["gmlid", V(256)], ["gmlid_codespace", "varchar(1000)"], ["name", V(1000)], ["name_codespace", V(4000)], ["description", V(4000)],
      ["envelope", "geometry(POLYGONZ)"], ["creation_date", "timestamp with time zone"], ["termination_date", "timestamp with time zone"],
      ["last_modification_date", "timestamp with time zone"], ["updating_person", V(256)], ["reason_for_update", V(4000)], ["lineage", V(256)],
    ],
    ext: ext("citymodel", [], ["inx", "envelope_spx"]),
  },
  {
    name: "appearance", x: 1037, y: 159, w: 74, split: 33, extSplit: 43, color: "#ffffff", tag: "appearance_module",
    attrs: [pk(), ["gmlid", V(256)], ["gmlid_codespace", "varchar(1000)"], ["name", V(1000)], ["name_codespace", V(4000)], ["description", V(4000)], ["theme", V(256)], fk("citymodel_id"), fk("cityobject_id")],
    ext: ext("appearance", ["cityobject_fk", "citymodel_fk"], ["inx", "theme_inx", "citymodel_fkx", "cityobject_fkx"]),
  },
  {
    name: "appear_to_surface_data", x: 1203, y: 203, w: 72, split: 31, extSplit: 44, color: "#ffffff", tag: "appearance_module",
    attrs: [pk("surface_data_id"), pk("appearance_id")],
    ext: ext("app_to_surf_data", ["fk", "fk1"], ["fkx", "fkx1"]),
  },
  {
    name: "cityobjectgroup", x: 867, y: 247, w: 78, split: 37, extSplit: 41, color: "#fcc0f0", tag: "cityobject_group_module",
    attrs: [pk(), ...codes, fk("brep_id"), ["other_geom", "geometry(GEOMETRYZ)"], fk("parent_cityobject_id")],
    ext: ext("group", ["cityobject_fk", "brep_fk", "parent_cityobj_fk"], ["brep_fkx", "xgeom_spx", "parent_cityobj_fkx"]),
  },
  {
    name: "group_to_cityobject", x: 867, y: 339, w: 74, split: 36, extSplit: 40, color: "#fcc0f0", tag: "cityobject_group_module",
    attrs: [pk("cityobject_id"), pk("cityobjectgroup_id"), ["role", V(256)]],
    ext: ext("group_to_cityobject", ["fk", "fk1"], ["fkx", "fkx1"]),
  },
  {
    name: "cityobject_member", x: 735, y: 269, w: 67, split: 28, extSplit: 40, color: "#fdf86c", tag: "core_module",
    attrs: [pk("citymodel_id"), pk("cityobject_id")],
    ext: ext("cityobject_member", ["fk", "fk1"], ["fkx", "fkx1"]),
  },
  {
    name: "external_reference", x: 753, y: 325, w: 65, split: 23, extSplit: 36, color: "#fdf86c", tag: "core_module",
    attrs: [pk(), ["infosys", V(4000)], ["name", V(4000)], ["uri", V(4000)], fk("cityobject_id")],
    ext: ext("external_ref", ["cityobject_fk"], ["cityobject_fkx"]),
  },
  {
    name: "generalization", x: 709, y: 391, w: 71, split: 33, extSplit: 43, color: "#fdf86c", tag: "core_module",
    attrs: [pk("cityobject_id"), pk("generalizes_to_id")],
    ext: ext("general", ["cityobject_fk", "generalizes_to_fk"], ["cityobject_fkx", "generalizes_fkx"]),
  },
  {
    name: "implicit_geometry", x: 678, y: 470, w: 80, split: 38, extSplit: 41, color: "#fdf86c",
    attrs: [pk(), ["mime_type", V(256)], ["reference_to_library", V(4000)], ["library_object", "bytea"], fk("relative_brep_id"), ["relative_other_geom", "geometry(GEOMETRYZ)"]],
    ext: ext("implicit_geometry", ["brep_fk"], []),
  },
  {
    name: "surface_geometry", x: 871, y: 483, w: 91, split: 34, extSplit: 40, color: "#1b1b1b", light: true,
    attrs: [pk(), ["gmlid", V(256)], ["gmlid_codespace", "varchar(1000)"], fk("parent_id"), fk("root_id"), ["is_solid", "numeric(1,0)"]],
    ext: [],
  },
  {
    name: "surface_data", x: 1059, y: 282, w: 82, split: 41, extSplit: 45, color: "#ffffff", tag: "appearance_module",
    attrs: [
      pk(), ["gmlid", V(256)], ["gmlid_codespace", "varchar(1000)"], ["name", V(1000)], ["name_codespace", V(4000)], ["description", V(4000)],
      ["is_front", "numeric(1,0)"], fk("objectclass_id"), ["x3d_shininess", "double precision"], ["x3d_transparency", "double precision"],
      ["x3d_ambient_intensity", "double precision"], ["x3d_specular_color", V(256)], ["x3d_diffuse_color", V(256)], ["x3d_emissive_color", V(256)],
      ["x3d_is_smooth", "numeric(1,0)"], fk("tex_image_id"), ["tex_texture_type", V(256)], ["tex_wrap_mode", V(256)], ["tex_border_color", V(256)],
      ["gt_prefer_worldfile", "numeric(1,0)"], ["gt_orientation", V(256)], ["gt_reference_point", "geometry(POINT)"],
    ],
    ext: ext("surface_data", ["tex_image_fk", "objclass_fk"], ["inx", "spx", "objclass_fkx", "tex_image_fkx"]),
  },
  {
    name: "tex_image", x: 1212, y: 286, w: 89, split: 47, extSplit: 47, color: "#ffffff", tag: "appearance_module",
    attrs: [pk(), ["tex_image_uri", V(4000)], ["tex_image_data", "bytea"], ["tex_mime_type", V(256)], ["tex_mime_type_codespace", V(4000)]],
    ext: ext("tex_image", [], []),
  },
  {
    name: "textureparam", x: 1203, y: 365, w: 89, split: 47, extSplit: 47, color: "#ffffff", tag: "appearance_module",
    attrs: [pk("surface_geometry_id"), ["is_texture_parametrization", "numeric(1,0)"], ["world_to_texture", V(1000)], ["texture_coordinates", "geometry(POLYGON)"], pk("surface_data_id")],
    ext: ext("texparam", ["geom_fk", "surface_data_fk"], ["geom_fkx", "surface_data_fkx"]),
  },
  {
    name: "grid_coverage", x: 1396, y: 356, w: 69, split: 28, extSplit: 41, color: "#1b1b1b", light: true, tag: "core",
    attrs: [pk(), ["rasterproperty", "raster"]],
    ext: ext("grid_coverage", [], ["raster_spx"]),
  },
  {
    name: "tin_relief", x: 1335, y: 400, w: 87, split: 34, extSplit: 34, color: "#8b6848", light: true, tag: "relief_module",
    attrs: [pk(), ["max_length", "double precision"], ["max_length_unit", V(4000)], ["stop_lines", "geometry(MULTILINESTRINGZ)"], ["break_lines", "geometry(MULTILINESTRINGZ)"], ["control_points", "geometry(MULTIPOINTZ)"], fk("surface_geometry_id")],
    ext: ext("tin_relief", ["comp_fk", "geom_fk"], ["geom_fkx", "stop_spx", "break_spx", "crtlpts_spx"]),
  },
  {
    name: "raster_relief", x: 1374, y: 470, w: 70, split: 23, extSplit: 42, color: "#8b6848", light: true,
    attrs: [pk(), ["raster_uri", V(4000)], fk("coverage_id")],
    ext: ext("raster_relief", ["comp_fk", "coverage_fk"], ["coverage_fkx"]),
  },
  {
    name: "relief_feat_to_rel_comp", x: 1186, y: 466, w: 70, split: 37, extSplit: 43, color: "#8b6848", light: true, tag: "relief_module",
    attrs: [pk("relief_component_id"), pk("relief_feature_id")],
    ext: ext("rel_feat_to_rel_comp", ["fk", "fk1"], ["fkx", "fkx1"]),
  },
  {
    name: "relief_feature", x: 1063, y: 483, w: 66, split: 11, extSplit: 39, color: "#8b6848", light: true,
    attrs: [pk(), ["lod", "numeric(1,0)"]],
    ext: ext("relief_feat", ["cityobject_fk", "objclass_fk"], []),
  },
];

const TITLE = 5.5;

function TypeText({ x, y, children }: { x: number; y: number; children: ReactNode }) {
  return (
    <text x={x} y={y} fontSize="3" fontWeight="700" fontStyle="italic" fill="#19aef6" stroke="#19aef6" strokeWidth=".2">
      {children}
    </text>
  );
}

function KindText({ x, y, kind }: { x: number; y: number; kind: string }) {
  return (
    <text x={x} y={y} textAnchor="end" fontSize="3" fill="#f070f0" stroke="#f070f0" strokeWidth=".1">
      « {kind} »
    </text>
  );
}

function EntityBox({ e }: { e: Entity }) {
  const attrsH = e.attrs.length * ROW + 0.6;
  const extH = e.ext.length * ROW + 0.6;
  const extY = e.y + TITLE + attrsH;
  const footY = extY + extH;
  const bottom = footY + 3.5;
  const mid = e.x + e.w / 2;
  const tagW = e.tag ? e.tag.length * 1.4 + 2 : 0;
  return (
    <g>
      <rect x={e.x + 1} y={e.y + 1} width={e.w} height={bottom - e.y} rx="1" fill="#0b0f15" />
      <rect x={e.x} y={e.y} width={e.w} height={TITLE + 1} rx="1" fill={e.color} stroke="#5c5f66" strokeWidth=".4" />
      <text x={mid} y={e.y + 4} textAnchor="middle" fontSize="3.3" fontWeight="700" fill={e.light ? "#f2f2f2" : "#1d1d1d"}>
        <tspan fill="#101010">citydb.</tspan>
        {e.name}
      </text>
      <rect x={e.x} y={e.y + TITLE} width={e.w} height={attrsH} fill="url(#attrs)" />
      <rect x={e.x} y={extY} width={e.w} height={extH} fill="url(#ext)" />
      <rect x={e.x} y={footY} width={e.w} height={3.5} fill={e.color === "#ffffff" ? "#ffffff" : "#e4e4e4"} />
      <path d={`M${e.x} ${extY}h${e.w}M${e.x} ${footY}h${e.w}`} stroke="#8a8a8a" strokeWidth=".8" />
      <path
        d={`M${mid - 5} ${footY + 1.7}h2M${mid - 1} ${footY + 2.6}l1-1.700 1 1.700zM${mid + 4} ${footY + 1}l1 1.700 1-1.700z`}
        stroke="#888"
        strokeWidth=".5"
        fill="none"
      />
      <rect x={e.x} y={e.y} width={e.w} height={bottom - e.y} rx="1" fill="none" stroke="#6d7076" strokeWidth=".4" />
      {e.attrs.map(([name, type, kind], i) => {
        const y = e.y + TITLE + (i + 0.5) * ROW + 0.4;
        const c = kind === "pk" ? "#e8cf4a" : kind === "fk" ? "#5cc45c" : kind === "nn" ? "#5fb5ee" : "#f2f2f2";
        return (
          <g key={i}>
            <circle cx={e.x + 3} cy={y} r="1.400" fill={c} stroke="#999" strokeWidth=".2" />
            <text x={e.x + 5.500} y={y + 1.200} fontSize="3" fill={kind === "pk" ? "#3aaef0" : "#fafafa"}>
              {name}
            </text>
            <TypeText x={e.x + e.split} y={y + 1.200}>
              {type}
            </TypeText>
            {kind && <KindText x={e.x + e.w - 1} y={y + 1.200} kind={kind} />}
          </g>
        );
      })}
      {e.ext.map(([name, type, kind], i) => {
        const y = extY + (i + 0.5) * ROW + 0.5;
        return (
          <g key={i}>
            <circle cx={e.x + 3} cy={y} r="1.400" fill="#f58a5c" />
            <text x={e.x + 5.500} y={y + 1.200} fontSize="3" fill="#4fd8d0">
              {name}
            </text>
            <TypeText x={e.x + e.extSplit} y={y + 1.200}>
              {type}
            </TypeText>
            {kind && <KindText x={e.x + e.w - 1} y={y + 1.200} kind={kind} />}
          </g>
        );
      })}
      {e.tag && (
        <g>
          <path d={`M${e.x - 1.5} ${bottom}h${tagW}l1.500 3-1.500 3h-${tagW}z`} fill="#fdf56e" stroke="#8f8a3c" strokeWidth=".4" />
          <text x={e.x} y={bottom + 4} fontSize="2.600" fill="#3d3a16">
            {e.tag}
          </text>
        </g>
      )}
    </g>
  );
}

const dots: number[][] = [
  [498.6, 119], [498.6, 148], [498.6, 168], [498.6, 198.5], [498.6, 228.5], [498.6, 258.7], [498.6, 299], [498.6, 319], [498.6, 386],
  [591, 219], [598.5, 219], [635, 269.6], [635, 276.6], [635, 327], [604, 365.5],
  [178, 302], [152, 324.7], [243, 314], [338, 302], [338, 310], [338, 317.7], [338, 362], [329, 381], [221.5, 413],
  [323, 390.5], [323, 403.7], [323, 416.7], [323, 430], [323, 443], [323, 469.5], [323, 497.5],
  [207, 473.5], [207, 484], [207, 494], [207, 504.5], [207, 514],
  [784, 212], [1030.6, 205], [1117, 209], [1197, 221], [1046, 256], [1215.5, 255], [1147, 319.5], [1206, 321.5], [1147, 345],
  [1197, 384], [1147, 369], [1197, 415.5], [1052.5, 377.5], [754, 264], [758.5, 262.5], [766.5, 320], [781.5, 382],
  [739.5, 442.7], [745.5, 442.7], [672, 471], [672, 501], [763.5, 509.7], [864.5, 484], [864.5, 510], [864.5, 513],
  [913.5, 477], [924.5, 477], [931.5, 477], [892, 395], [1135.5, 497.5], [1179.5, 492], [1328.5, 450], [1328.5, 472.5], [1367.5, 507], [1427.5, 393],
];

const links: string[] = [
  "M178 302C208 302 213 314 243 314",
  "M152 325C152 380 175 413 221 413",
  "M498 119C560 119 571 245 600 340S650 500 672 560",
  "M498 148C545 148 556 200 575 280S600 420 672 501",
  "M498 168C560 168 620 235 690 350S760 450 864 484",
  "M498 198C570 200 640 290 700 370S790 460 864 484",
  "M498 228C560 230 620 300 690 385S780 470 864 484",
  "M498 259C560 262 620 340 690 410S800 480 864 484",
  "M498 299C540 300 560 340 620 450",
  "M498 319C560 325 620 470 672 471",
  "M498 386C560 388 620 440 700 465S800 484 864 484",
  "M591 219V210.500H643.500V276.600H635",
  "M598.500 219V217.500H636.500V269.600",
  "M635 327C660 330 720 430 864 484",
  "M604 365C610 430 625 471 672 471",
  "M784 212C900 212 920 205 1030 205",
  "M1117 209C1160 209 1150 221 1197 221",
  "M1046 256C1046 420 980 440 900 500S800 540 780 560",
  "M1215 255C1215 290 1190 319 1147 319",
  "M1206 321C1170 321 1185 345 1147 345",
  "M1197 384C1170 384 1175 369 1147 369",
  "M1197 415C1130 415 1080 480 1020 520",
  "M1052 377C930 377 890 450 820 520",
  "M754 264V250",
  "M758.500 262V250",
  "M766.500 320C772 350 765 420 755 520",
  "M781.500 382C782 440 775 480 760 520",
  "M739.500 443V520",
  "M745.500 443V520",
  "M924.500 477V468.500H976.500V520",
  "M931.500 477V475.500H969V520",
  "M892 395C890 450 850 480 830 520",
  "M878 390C875 450 850 480 820 520",
  "M902 390C900 430 870 480 830 520",
  "M909 390C910 420 913 450 913.500 477",
  "M1135 497C1160 497 1155 492 1179 492",
  "M1135 497C1230 450 1260 450 1328 450",
  "M1328 472C1300 472 1280 500 1274 520",
  "M1367 507C1345 507 1340 511 1325 520",
  "M1427 393C1427 430 1415 450 1412 470",
  "M329 381C329 430 355 460 420 515",
  "M338 302C480 306 560 470 864 484",
  "M338 310C470 314 550 475 864 484",
  "M338 318C460 320 540 480 864 484",
  "M338 362C400 362 420 400 520 520",
  "M323 390C480 394 600 480 864 484",
  "M323 404C480 408 600 482 864 484",
  "M323 417C480 421 600 483 864 484",
  "M323 430C480 434 600 483 864 484",
  "M323 443C480 447 600 483 864 484",
  "M323 469C480 471 600 484 864 484",
  "M323 497C360 498 380 505 400 520",
  "M207 473C450 473 500 484 864 484",
  "M207 484H864",
  "M207 494C450 494 500 484 864 484",
  "M207 504C450 504 500 485 864 484",
  "M207 514C450 514 500 486 864 484",
  "M490 350C560 380 640 430 690 520",
  "M490 340C570 380 620 430 720 520",
  "M490 330C570 360 650 430 750 520",
  "M538 515C600 460 700 500 864 484",
  "M560 520C620 470 740 510 864 484",
  "M600 520C650 480 760 505 864 484",
  "M620 520C650 500 660 501 672 501",
  "M640 520C700 490 780 500 864 484",
  "M763 510C800 508 820 500 864 510",
  "M600 420C700 520 800 500 864 513",
  "M445 485C460 500 475 510 490 520",
  "M604 365C610 400 640 480 660 520",
];

function Canvas() {
  return (
    <svg className="block h-full w-full" role="img" aria-label="Database model diagram" fontFamily='"Noto Sans", sans-serif'>
      <defs>
        <pattern id="dots" width="5" height="5" patternUnits="userSpaceOnUse">
          <rect x="2" y="2" width="1" height="1" fill="#20283a" />
        </pattern>
        <linearGradient id="attrs" x1="0" y1="0" x2="0" y2="1">
          <stop offset="0" stopColor="#cfcfcf" />
          <stop offset="1" stopColor="#fafafa" />
        </linearGradient>
        <linearGradient id="ext" x1="0" y1="0" x2="0" y2="1">
          <stop offset="0" stopColor="#fafafa" />
          <stop offset="1" stopColor="#cfcfcf" />
        </linearGradient>
      </defs>
      <g transform="translate(-83 -46)">
        <rect x="83" y="46" width="1419" height="1200" fill="url(#dots)" />
        <path d="M83.500 46v1200M770.500 46v1200M1457.500 46v1200M83 46.500h1419" stroke="#363d58" strokeDasharray="3 2" fill="none" />
        <path d="M1502.500 46v1200" stroke="#6b1a24" />
        <g stroke="#b8b5b0" strokeWidth=".8" strokeOpacity=".26" fill="none">
          {links.map((d, i) => (
            <path key={i} d={d} />
          ))}
        </g>
        {entities.map((e) => (
          <EntityBox key={e.name} e={e} />
        ))}
        <g fill="#e4e4e4">
          {dots.map(([x, y], i) => (
            <circle key={i} cx={x} cy={y} r="2.200" />
          ))}
        </g>
        <path d="M101 67h143a1.500 1.500 0 0 1 1.500 1.500v43l-4.500 4.500H101.500a1.500 1.500 0 0 1-1.500-1.500V68z" fill="#e5e36f" stroke="#8f8e46" strokeWidth=".5" />
        <g fontSize="3.5" fill="#26251a" stroke="#26251a" strokeWidth=".08">
          <text x="102" y="72.500">[ 3DCityDB Project ]</text>
          <text x="102" y="82">The award winning 3D City Database is a free geo database to store, represent, and</text>
          <text x="102" y="87">manage virtual 3D city models on top of a standard spatial relational database. The</text>
          <text x="102" y="92">database schema implements the CityGML standard with semantically rich and multi-</text>
          <text x="102" y="97">scale urban objects facilitating complex analysis tasks, far beyond visualization.</text>
          <text x="102" y="106">Site: http://www.3dcitydb.org</text>
          <text x="102" y="111">Created by: Felix Kunde</text>
        </g>
      </g>
    </svg>
  );
}

/* ------------------------------------------------------------- scrollbars */

function ScrollBar({ thumb }: { thumb: string }) {
  return (
    <div className="flex w-3 shrink-0 flex-col border-x border-[#434a66] bg-[#2b3042]">
      <button type="button" aria-label="Scroll up" className="flex h-[13px] items-center justify-center bg-[#3a4059]">
        <svg width="8" height="6" viewBox="0 0 8 6" aria-hidden="true">
          <path d="M0 6h8L4 0z" fill="#e4e6ea" />
        </svg>
      </button>
      <div className="flex flex-1 flex-col">
        <div className={thumb} />
      </div>
      <button type="button" aria-label="Scroll down" className="flex h-[13px] items-center justify-center bg-[#3a4059]">
        <svg width="8" height="6" viewBox="0 0 8 6" aria-hidden="true">
          <path d="M0 0h8L4 6z" fill="#e4e6ea" />
        </svg>
      </button>
    </div>
  );
}

/* ------------------------------------------------------------ search dock */

function DockButton({ icon, label, menu }: { icon: string; label: string; menu?: boolean }) {
  return (
    <button
      type="button"
      className={
        menu
          ? "relative flex h-7 items-center gap-0.5 rounded-[3px] border border-[#434a66] bg-[#3a4059] pr-[17px] pl-[5px] text-sm leading-5"
          : "relative flex h-7 items-center gap-0.5 rounded-[3px] border border-[#434a66] bg-[#3a4059] pr-[7px] pl-[5px] text-sm leading-5"
      }
    >
      <Glyph name={icon} size={20} />
      {label}
      {menu && (
        <svg width="6" height="4" viewBox="0 0 6 4" aria-hidden="true" className="absolute right-1 bottom-1">
          <path d="M0 0h6L3 4z" fill="#e4e6ea" />
        </svg>
      )}
    </button>
  );
}

type Result = [id: string, object: string, icon: string, type: string, parent: string, parentIcon: string, parentType: string];

const results: Result[] = [
  ["3011", "citydb", "schema", "Schema", "3DCityDB_v3.3", "database", "Database"],
  ["4007", "city_furniture_module", "tag", "Tag", "3DCityDB_v3.3", "database", "Database"],
  ["4012", "city_object_group_module", "tag", "Tag", "3DCityDB_v3.3", "database", "Database"],
  ["5366", "citymodel_seq", "sequence", "Sequence", "citydb", "schema", "Schema"],
  ["5367", "cityobject_seq", "sequence", "Sequence", "citydb", "schema", "Schema"],
  ["5368", "cityobject_member", "table", "Table", "citydb", "schema", "Schema"],
  ["5369", "citymodel_id", "column", "Column", "cityobject_member", "table", "Table"],
  ["5370", "cityobject_id", "column", "Column", "cityobject_member", "table", "Table"],
  ["5371", "cityobject_member_pk", "constraint", "Constraint", "cityobject_member", "table", "Table"],
  ["5374", "cityobject_id", "column", "Column", "generalization", "table", "Table"],
  ["5378", "cityobjectgroup", "table", "Table", "citydb", "schema", "Schema"],
  ["5389", "cityobjectgroup_pk", "constraint", "Constraint", "cityobjectgroup", "table", "Table"],
  ["5391", "cityobject_id", "column", "Column", "group_to_cityobject", "table", "Table"],
  ["5392", "cityobjectgroup_id", "column", "Column", "group_to_cityobject", "table", "Table"],
  ["5405", "city_furniture", "table", "Table", "citydb", "schema", "Schema"],
];

const headers: [string, string][] = [
  ["oid", "ID"],
  ["object", "Object"],
  ["type", "Type"],
  ["schema", "Parent"],
  ["type", "Parent type"],
  ["comment", "Comment"],
];

function ResultTable() {
  const cell = "border-r border-b border-[#2c3038] p-0 pl-[3px]";
  return (
    <table className="w-full table-fixed border-separate border-spacing-0 text-sm leading-5 whitespace-nowrap">
      <colgroup>
        <col className="w-5" />
        <col className="w-[54px]" />
        <col className="w-[212px]" />
        <col className="w-[91px]" />
        <col className="w-[193px]" />
        <col className="w-[115px]" />
        <col />
      </colgroup>
      <thead>
        <tr className="h-6 bg-[#3a4059]">
          <th aria-label="Row" className="border-r border-[#454c68] p-0" />
          {headers.map(([icon, label]) => (
            <th key={label} scope="col" className="border-r border-[#454c68] p-0 pt-0.5 pl-[3px] font-normal">
              <span className="flex items-center gap-0.5">
                <Glyph name={icon} size={17} />
                {label}
                {label === "ID" && (
                  <svg width="9" height="6" viewBox="0 0 9 6" aria-label="Sorted descending">
                    <path d="M0 0h9L4.500 6z" fill="#e4e6ea" />
                  </svg>
                )}
              </span>
            </th>
          ))}
        </tr>
      </thead>
      <tbody>
        {results.map(([id, object, icon, type, parent, parentIcon, parentType], i) => (
          <tr key={id} className="h-[26px] odd:bg-[#161a25] even:bg-[#1a1f2c] nth-[4n]:h-[27px]">
            <th scope="row" className="border-r border-b border-[#454c68] bg-[#3a4059] p-0 pl-0.5 text-left font-normal">
              {i + 1}
            </th>
            <td className={cell}>{id}</td>
            <td className={cell}>
              <span className="flex items-center gap-1.5">
                <Glyph name={icon} size={17} />
                {object}
              </span>
            </td>
            <td className={cell}>
              <i>{type}</i>
            </td>
            <td className={cell}>
              <span className="flex items-center gap-1.5">
                <Glyph name={parentIcon} size={17} />
                {parent}
              </span>
            </td>
            <td className={cell}>
              <i>{parentType}</i>
            </td>
            <td className="border-b border-[#2c3038] p-0" />
          </tr>
        ))}
      </tbody>
    </table>
  );
}

function SearchDock() {
  return (
    <section aria-label="Search" className="relative flex min-h-0 flex-col pr-1 pl-[3px]">
      <div className="absolute top-0.5 left-[911px] h-[3px] w-[19px] bg-[#1d82c4]" />
      <form className="flex h-9 items-center">
        <label htmlFor="pattern" className="w-12 text-xs font-bold">
          Pattern
        </label>
        <div className="relative w-[592px]">
          <input
            id="pattern"
            defaultValue="cit*"
            className="h-[26px] w-full rounded-[3px] border border-[#3d4460] bg-[#151923] pl-0.5 text-sm leading-5 text-[#e4e6ea]"
          />
          <button type="button" aria-label="Clear pattern" className="absolute top-[7px] right-1.5">
            <svg width="17" height="13" viewBox="0 0 17 13" aria-hidden="true">
              <path d="M5 0h12v13H5L0 6.500z" fill={RED} />
              <path d="M7 3l7 7M14 3l-7 7" stroke="#8d2020" strokeWidth="1.200" />
            </svg>
          </button>
        </div>
        <div className="ml-1 flex gap-1">
          <DockButton icon="search" label="Search" />
          <DockButton icon="filter" label="Filter" menu />
          <DockButton icon="trash" label="Clear" />
          <DockButton icon="select" label="Select" menu />
          <DockButton icon="fade" label="Fade out" menu />
        </div>
        <output className="ml-3.5 text-sm leading-5">
          Found <b>69</b> object(s).
        </output>
        <button type="button" aria-label="Close search" className="mr-[3px] ml-auto">
          <svg width="13" height="13" viewBox="0 0 13 13" aria-hidden="true">
            <path d="M1 1l11 11M12 1L1 12" stroke="#ff4040" strokeWidth="2.200" />
          </svg>
        </button>
      </form>
      <div className="flex min-h-0 flex-1">
        <div className="min-w-0 flex-1 overflow-hidden border-b border-[#434a66] bg-[#1a1f2c]">
          <ResultTable />
        </div>
        <ScrollBar thumb="h-[22%] border-b border-[#4a5170] bg-[#3a4059]" />
      </div>
    </section>
  );
}

/* ------------------------------------------------------------- status bar */

function Tab({ icon, children, active }: { icon: string; children: ReactNode; active?: boolean }) {
  return (
    <button
      type="button"
      aria-pressed={active}
      className={
        active
          ? "flex h-[29px] items-center gap-[3px] rounded-[3px] border border-[#2b8fd0] bg-[#1d73ad] px-[5px] text-sm leading-5"
          : "flex h-[29px] items-center gap-[3px] rounded-[3px] border border-[#434a66] bg-[#3a4059] px-[5px] text-sm leading-5"
      }
    >
      <Glyph name={icon} size={20} />
      <span>{children}</span>
    </button>
  );
}

function StatusBar() {
  return (
    <footer className="flex h-[38px] shrink-0 items-center border-b border-[#434a66] px-[3px] pt-0.5">
      <div className="flex gap-1">
        <Tab icon="validation">
          <u>V</u>alidation
        </Tab>
        <Tab icon="searchDoc" active>
          Sea<u>r</u>ch
        </Tab>
        <Tab icon="layers">
          <u>L</u>ayers
        </Tab>
        <Tab icon="changelog">
          C<u>h</u>angelog
        </Tab>
      </div>
      <div className="flex-[12]" />
      <div className="flex gap-1 text-sm leading-5">
        <div className="flex h-[29px] w-[207px] items-center rounded-[3px] border border-[#4b5372] bg-[#3f4660]">
          <span className="flex w-[129px] items-center gap-[5px] border-r border-[#373d54] pl-[5px]">
            <Glyph name="coords" size={18} />
            3096, 2808
          </span>
          <span className="flex items-center gap-1.5 pl-2">
            <Glyph name="search" size={19} />
            25%
          </span>
        </div>
        <div className="flex h-[29px] w-[164px] items-center rounded-[3px] border border-[#4b5372] bg-[#3f4660]">
          <span className="flex w-[82px] items-center gap-[5px] border-r border-[#373d54] pl-[5px]">
            <Glyph name="cross" size={18} />
            None
          </span>
          <span className="flex items-center gap-[5px] pl-2">
            <Glyph name="selected" size={18} />
            None
          </span>
        </div>
        <div className="flex h-[29px] items-center gap-1 rounded-[3px] border border-[#55cbe6] bg-[#4a7690] px-1">
          <Glyph name="dbm" size={20} />
          .dbm
        </div>
      </div>
      <div className="flex-[13]" />
      <div className="flex gap-1">
        <Tab icon="object">
          O<u>b</u>jects
        </Tab>
        <Tab icon="operations">
          <u>O</u>perations
        </Tab>
      </div>
    </footer>
  );
}

/* -------------------------------------------------------------------- app */

export default function App() {
  return (
    <div className="flex h-screen flex-col overflow-hidden bg-[#151b24] font-['Noto_Sans',sans-serif] text-[#dfe1e6]">
      <Toolbar />
      <div className="flex min-h-0 flex-1">
        <Sidebar />
        <main className="flex min-w-0 flex-1 flex-col border-l border-[#3d4460] bg-[#2b3042]">
          <div className="grid min-h-0 flex-1 grid-rows-[474fr_457fr]">
            <section aria-label="Model canvas" className="flex min-h-0 border-t border-[#434a66] pt-1 pr-1 pl-[3px]">
              <div className="min-w-0 flex-1 overflow-hidden bg-[#151b24]">
                <Canvas />
              </div>
              <ScrollBar thumb="mt-px h-[32%] border-b border-[#4a5170] bg-[#3a4059]" />
            </section>
            <SearchDock />
          </div>
          <StatusBar />
        </main>
      </div>
    </div>
  );
}
